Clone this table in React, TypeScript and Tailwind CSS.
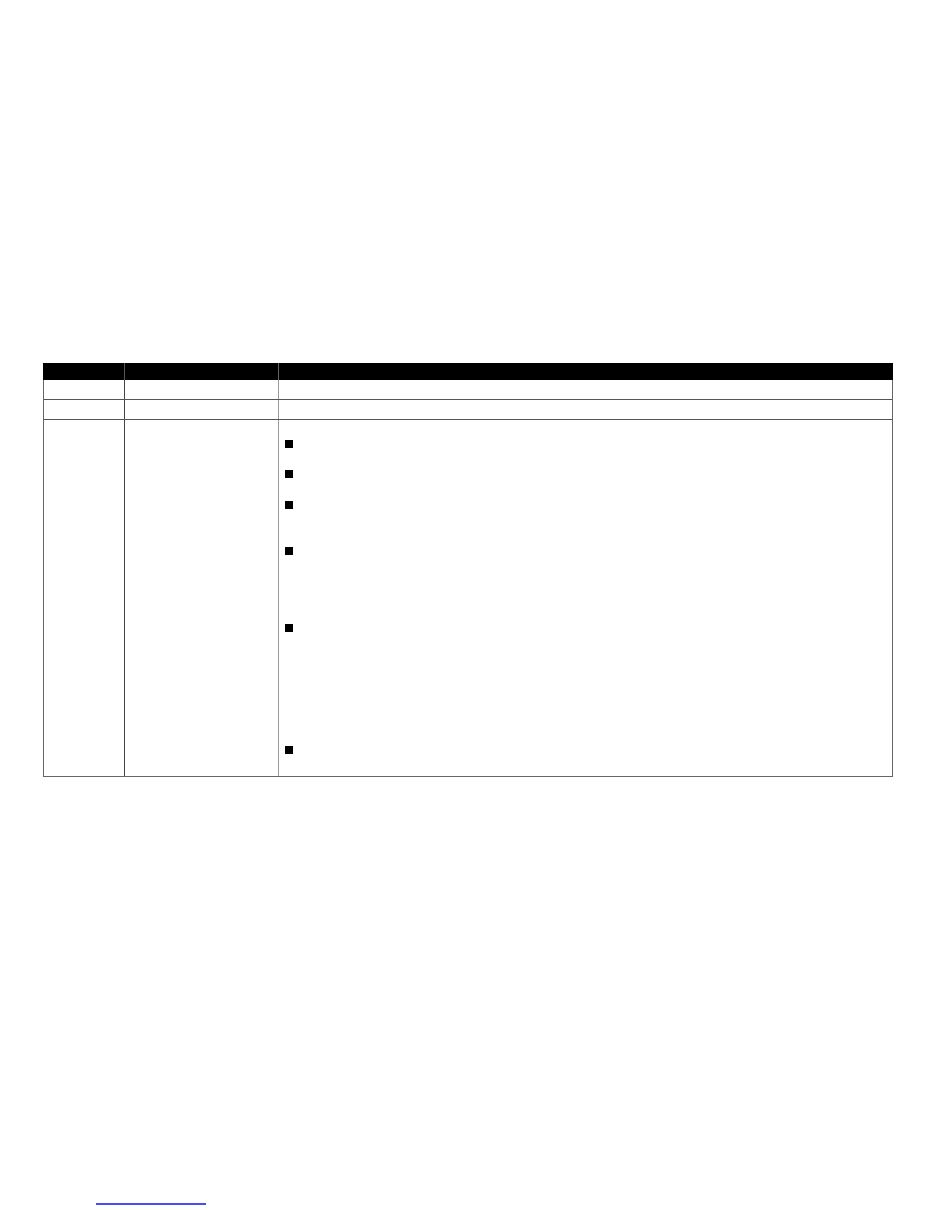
const bulletGaps = [30, 31, 46, 77, 122, 8];

export default function App() {
  return (
    <div className="h-[1210px] w-[935px] bg-white font-['Liberation_Sans',sans-serif]">
      <div className="ml-[43px] w-[850px] pt-[363px]">
        {/* header */}
        <div className="flex h-[17px] bg-black">
          <div className="w-[82px] border-r border-[#555]" />
          <div className="w-[154px] border-r border-[#666]" />
          <div className="flex-1" />
        </div>

        <div className="border-x border-b border-[#666]">
          <div className="flex h-[20px] border-b border-[#555]">
            <div className="w-[81px] border-r border-[#444]" />
            <div className="w-[154px] border-r border-[#999]" />
            <div className="flex-1" />
          </div>
          <div className="flex h-[20px] border-b border-[#555]">
            <div className="w-[81px] border-r border-[#444]" />
            <div className="w-[154px] border-r border-[#999]" />
            <div className="flex-1" />
          </div>
          <div className="flex h-[356px]">
            <div className="w-[81px] border-r border-[#444]" />
            <div className="w-[154px] border-r border-[#999]" />
            <div className="flex-1 pl-[6px] pt-[20px]">
              {bulletGaps.map((h, i) => (
                <div key={i} style={{ height: h }}>
                  <div className="h-[8px] w-[8px] bg-black" />
                </div>
              ))}
            </div>
          </div>
        </div>
      </div>

      <div className="ml-[96px] mt-[426px] h-[2px] w-[110px] bg-[#4b4bf5]" />
    </div>
  );
}
